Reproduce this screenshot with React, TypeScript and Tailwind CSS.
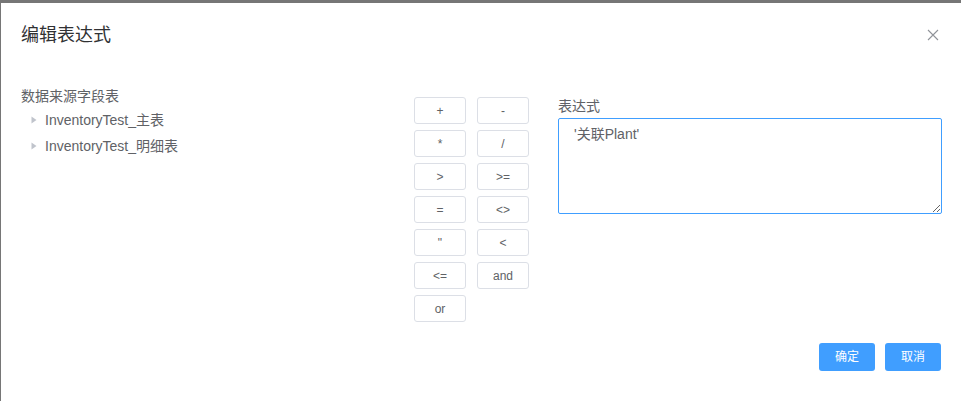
import React from "react";

const ops: string[][] = [
  ["+", "-"],
  ["*", "/"],
  [">", ">="],
  ["=", "<>"],
  ['"', "<"],
  ["<=", "and"],
  ["or"],
];

const fontStack = { fontFamily: '"Liberation Sans", Arial, "Noto Sans CJK SC", sans-serif' };

function Caret() {
  return (
    <svg width="6" height="8" viewBox="0 0 6 8" className="shrink-0">
      <path d="M0.5 0.5 L5.5 4 L0.5 7.5 Z" fill="#c0c4cc" />
    </svg>
  );
}

function OpButton({ label }: { label: string }) {
  return (
    <button className="w-[52px] h-[27px] border border-[#dcdfe6] rounded-[3px] bg-white text-[12px] text-[#606266] flex items-center justify-center leading-none">
      {label}
    </button>
  );
}

export default function App() {
  return (
    <div className="w-[961px] h-[401px] bg-[#767676] pt-[3px] pl-[1px] flex overflow-hidden" style={fontStack}>
      <div className="flex-1 bg-white flex flex-col">
        {/* header */}
        <div className="flex justify-between pl-[20px] pr-[22px] pt-[20px] h-[64px] items-start">
          <span className="text-[18px] leading-[24px] text-[#303133]">编辑表达式</span>
          <svg width="12" height="12" viewBox="0 0 12 12" className="mt-[6px]">
            <path d="M1 1 L11 11 M11 1 L1 11" stroke="#909399" strokeWidth="1.1" />
          </svg>
        </div>

        {/* body */}
        <div className="flex pl-[20px] pr-[19px]">
          <div className="w-[393px] pt-[19px]">
            <div className="text-[14px] leading-[20px] text-[#606266]">数据来源字段表</div>
            <div className="mt-[1px]">
              {["InventoryTest_主表", "InventoryTest_明细表"].map((t) => (
                <div key={t} className="h-[26px] flex items-center pl-[10px] gap-[8px]">
                  <Caret />
                  <span className="text-[14px] text-[#606266]">{t}</span>
                </div>
              ))}
            </div>
          </div>

          <div className="pt-[30px] flex flex-col gap-[6px] w-[115px]">
            {ops.map((row, i) => (
              <div key={i} className="flex gap-[11px]">
                {row.map((op) => (
                  <OpButton key={op} label={op} />
                ))}
              </div>
            ))}
          </div>

          <div className="flex-1 ml-[29px] pt-[29px]">
            <div className="text-[14px] leading-[20px] text-[#606266]">表达式</div>
            <textarea
              defaultValue="'关联Plant'"
              className="mt-[2px] block w-full h-[96px] border border-[#409eff] rounded-[2px] px-[15px] py-[5px] text-[14px] leading-[21px] text-[#606266] outline-none"
              style={fontStack}
            />
          </div>
        </div>

        {/* footer */}
        <div className="flex justify-end gap-[10px] pr-[20px] mt-[21px]">
          <button className="w-[56px] h-[28px] rounded-[3px] bg-[#409eff] text-white text-[12px]">确定</button>
          <button className="w-[56px] h-[28px] rounded-[3px] bg-[#409eff] text-white text-[12px]">取消</button>
        </div>
      </div>
    </div>
  );
}
